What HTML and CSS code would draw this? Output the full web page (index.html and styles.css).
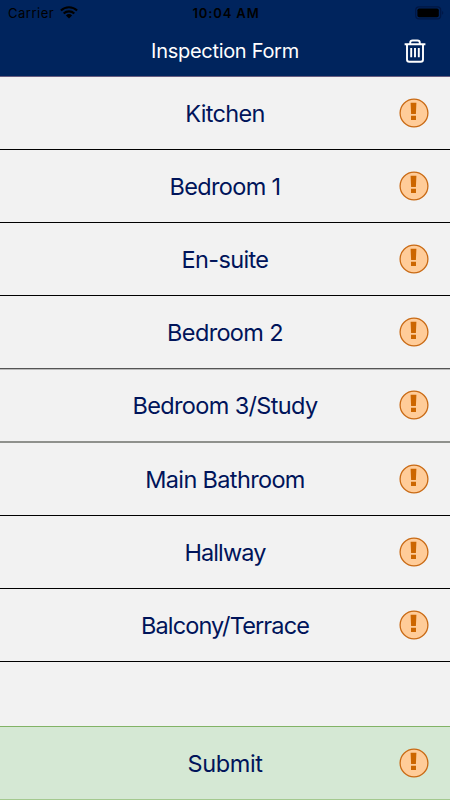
FILE: index.html
```html
<!DOCTYPE html>
<html lang="en">
<head>
    <meta charset="UTF-8">
    <meta name="viewport" content="width=device-width, initial-scale=1.0">
    <title>Inspection Form</title>
    <link rel="stylesheet" href="styles.css">
</head>
<body>
    <!-- shared icon -->
    <svg class="sprite" width="0" height="0">
        <symbol id="alert" viewBox="0 0 30 30">
            <circle cx="15" cy="15" r="13.9" fill="#ffcc99" stroke="#c96a14" stroke-width="1.3"/>
            <path d="M11.6 4.7h5.8l-.5 11.4h-4.8zM12 17.8h5v4.2h-5z" fill="#cc6600"/>
        </symbol>
    </svg>
    <div class="container">
        <header class="header">
            <div class="status-bar">
                <div class="carrier">
                    <span>Carrier</span>
                    <svg width="18" height="13" viewBox="0 0 18 13">
                        <path d="M.9 4.6a11.6 11.6 0 0 1 16.2 0M3.7 7.5a7.6 7.6 0 0 1 10.6 0" fill="none" stroke="#000" stroke-width="2.1"/>
                        <path d="M9 12.6L5.9 9.4a4.5 4.5 0 0 1 6.2 0z"/>
                    </svg>
                </div>
                <div class="time">10:04 AM</div>
                <div class="battery">
                    <svg width="29" height="14" viewBox="0 0 29 14">
                        <rect x=".7" y=".8" width="25" height="12" rx="3.4" fill="none" stroke="#001744" stroke-width="1.2"/>
                        <rect x="2.4" y="2.5" width="21.4" height="8.8" rx="1.8"/>
                        <path d="M27.2 5c1.4.5 1.4 3.3 0 3.8z" fill="#001744"/>
                    </svg>
                </div>
            </div>
            <div class="title-bar">
                <h1 class="title">Inspection Form</h1>
                <button class="delete" aria-label="Delete">
                    <svg width="22" height="24" viewBox="0 0 22 24" fill="none" stroke="#fff" stroke-width="1.9">
                        <path d="M.6 5.2h20.8M6.2 5V3.7Q6.2 1.5 8.6 1.5h4.8q2.4 0 2.4 2.2V5M3 5.2v15.2q0 2.3 2.3 2.3h11.4q2.3 0 2.3-2.3V5.2"/>
                        <path d="M7.2 9v9.3M11 9v9.3M14.8 9v9.3" stroke-width="1.9"/>
                    </svg>
                </button>
            </div>
        </header>
        <main class="rooms">
            <div class="room"><span>Kitchen</span><svg class="alert"><use href="#alert"/></svg></div>
            <div class="room"><span>Bedroom 1</span><svg class="alert"><use href="#alert"/></svg></div>
            <div class="room"><span>En-suite</span><svg class="alert"><use href="#alert"/></svg></div>
            <div class="room dim"><span>Bedroom 2</span><svg class="alert"><use href="#alert"/></svg></div>
            <div class="room soft"><span>Bedroom 3/Study</span><svg class="alert"><use href="#alert"/></svg></div>
            <div class="room"><span>Main Bathroom</span><svg class="alert"><use href="#alert"/></svg></div>
            <div class="room tight"><span>Hallway</span><svg class="alert"><use href="#alert"/></svg></div>
            <div class="room tight"><span>Balcony/Terrace</span><svg class="alert"><use href="#alert"/></svg></div>
        </main>
        <div class="room submit"><span>Submit</span><svg class="alert"><use href="#alert"/></svg></div>
    </div>
</body>
</html>
```

FILE: styles.css
```css
body {
    font-family: Inter, "Liberation Sans", sans-serif;
    background-color: #f2f2f2;
    margin: 0;
}
.sprite {
    display: block;
}
.container {
    display: flex;
    flex-direction: column;
    height: 100vh;
    overflow: hidden;
}
.header {
    background-color: #00245d;
    border-bottom: 1px solid #665c80;
    height: 76px;
    flex-shrink: 0;
}
.status-bar {
    display: grid;
    grid-template-columns: 1fr auto 1fr;
    align-items: center;
    height: 25px;
    padding: 0 6px 0 8px;
}
.carrier {
    display: flex;
    align-items: center;
    gap: 6px;
    font-size: 13px;
    letter-spacing: 0.5px;
}
.time {
    font-size: 13px;
    font-weight: 600;
    letter-spacing: 0.85px;
}
.battery {
    display: flex;
    justify-content: flex-end;
}
.title-bar {
    display: grid;
    grid-template-columns: 1fr auto 1fr;
    align-items: center;
    height: 51px;
    padding: 0 24px;
}
.title {
    grid-column: 2;
    margin: 0;
    color: white;
    font-size: 20px;
    font-weight: 400;
    letter-spacing: -0.3px;
}
.delete {
    display: flex;
    justify-self: end;
    background: none;
    border: none;
    padding: 0;
    cursor: pointer;
}
.rooms {
    flex: 1;
}
.room {
    display: grid;
    grid-template-columns: 1fr auto 1fr;
    align-items: center;
    box-sizing: border-box;
    height: 73px;
    padding: 0 21px;
    border-bottom: 1px solid black;
    color: #00145a;
    font-size: 23.5px;
    letter-spacing: -0.65px;
}
.room.dim {
    border-bottom-color: #555;
    box-shadow: 0 1px #bbb;
}
.room.soft {
    height: 74px;
    border-bottom: 2px solid #8f918d;
}
.room.tight {
    letter-spacing: -0.87px;
}
.room span {
    grid-column: 2;
}
.alert {
    width: 30px;
    height: 30px;
    justify-self: end;
}
.room.submit {
    height: 74px;
    flex-shrink: 0;
    background-color: #d5e8d4;
    border-top: 1px solid #82b366;
    border-bottom: 1px solid #a4c98f;
    letter-spacing: -0.4px;
}
```
